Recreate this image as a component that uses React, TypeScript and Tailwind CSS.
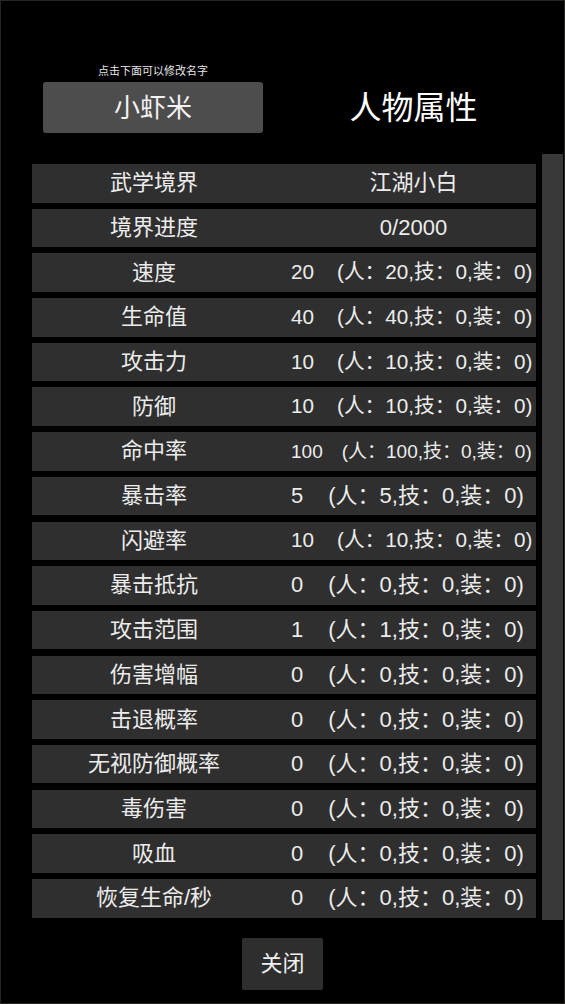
const font = "font-['Liberation_Sans','Noto_Sans_CJK_SC',sans-serif]";

type Stat = { label: string; value: number };

const stats: Stat[] = [
  { label: "速度", value: 20 },
  { label: "生命值", value: 40 },
  { label: "攻击力", value: 10 },
  { label: "防御", value: 10 },
  { label: "命中率", value: 100 },
  { label: "暴击率", value: 5 },
  { label: "闪避率", value: 10 },
  { label: "暴击抵抗", value: 0 },
  { label: "攻击范围", value: 1 },
  { label: "伤害增幅", value: 0 },
  { label: "击退概率", value: 0 },
  { label: "无视防御概率", value: 0 },
  { label: "毒伤害", value: 0 },
  { label: "吸血", value: 0 },
  { label: "恢复生命/秒", value: 0 },
];

// text shrinks to fit like a best-fit label
const sizeFor = (v: number) =>
  v >= 100 ? "text-[19px]" : v >= 10 ? "text-[20.7px]" : "text-[22px]";
const gapFor = (v: number) => (v >= 100 ? "ml-[19px]" : v >= 10 ? "ml-[23px]" : "ml-[25px]");

const Row = ({ label, children }: { label: string; children: React.ReactNode }) => (
  <div className="flex h-[38.5px] items-center bg-[#2f2f2f]">
    <div className="w-[244px] shrink-0 text-center text-[22px] leading-none">{label}</div>
    <div className="flex min-w-0 flex-1 items-center pl-[15px]">{children}</div>
  </div>
);

export default function App() {
  return (
    <div className={`${font} relative flex h-[1004px] w-[565px] flex-col bg-black text-[#ececec] shadow-[inset_0_0_0_1px_#26261f]`}>
      {/* header */}
      <div className="flex items-end pl-[43px] pt-[65px]">
        <div className="flex w-[220px] flex-col items-center">
          <span className="text-[11px] leading-[13px] text-[#e6e6e6]">点击下面可以修改名字</span>
          <button className="mt-[4px] flex h-[51px] w-full items-center justify-center rounded-[3px] bg-[#4d4d4d] text-[26px] leading-none text-[#f2f2f2]">
            小虾米
          </button>
        </div>
        <div className="ml-[28px] flex h-[51px] w-[245px] items-center justify-center text-[32px] leading-none text-white">
          人物属性
        </div>
      </div>

      {/* attribute list + scrollbar */}
      <div className="mt-[21px] flex pl-[32px]">
        <div className="flex w-[504px] flex-col gap-[6.19px] pt-[10px]">
          <Row label="武学境界">
            <span className="w-full text-center text-[22px] leading-none">江湖小白</span>
          </Row>
          <Row label="境界进度">
            <span className="w-full text-center text-[22px] leading-none">0/2000</span>
          </Row>
          {stats.map((s) => (
            <Row key={s.label} label={s.label}>
              <span className={`whitespace-pre leading-none ${sizeFor(s.value)}`}>
                {s.value}
                <span className={gapFor(s.value)}>(人：{s.value},技：0,装：0)</span>
              </span>
            </Row>
          ))}
        </div>
        <div className="ml-[6px] h-[766px] w-[21px] bg-[#383838]" />
      </div>

      {/* close */}
      <button className="mx-auto mt-[18px] flex h-[52px] w-[81px] items-center justify-center rounded-[2px] bg-[#2e2e2e] text-[22px] leading-none text-[#f0f0f0]">
        关闭
      </button>
    </div>
  );
}
